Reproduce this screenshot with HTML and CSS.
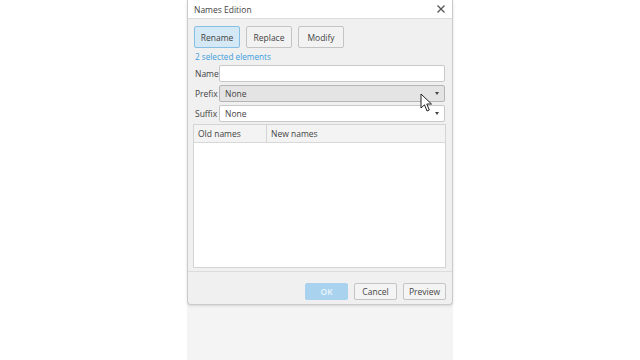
FILE: index.html
```html
<!DOCTYPE html>
<html lang="en">
<head>
    <meta charset="UTF-8">
    <meta name="viewport" content="width=device-width, initial-scale=1.0">
    <title>Names Edition</title>
    <link rel="stylesheet" href="styles.css">
</head>
<body>
    <div class="stage">
        <div class="dialog">
            <div class="title-bar">
                <span class="title">Names Edition</span>
                <svg class="close" width="8" height="8" viewBox="0 0 8 8">
                    <path d="M0.5 0.5 L7.5 7.5 M7.5 0.5 L0.5 7.5" stroke="#555" stroke-width="1.3"/>
                </svg>
            </div>
            <div class="content">
                <div class="modes">
                    <button class="mode active">Rename</button>
                    <button class="mode">Replace</button>
                    <button class="mode">Modify</button>
                </div>
                <p class="selection">2 selected elements</p>
                <div class="field">
                    <label class="label">Name</label>
                    <div class="input"></div>
                </div>
                <div class="field">
                    <label class="label">Prefix</label>
                    <div class="input select hover">None<span class="arrow"></span></div>
                </div>
                <div class="field">
                    <label class="label">Suffix</label>
                    <div class="input select">None<span class="arrow"></span></div>
                </div>
                <div class="table">
                    <div class="table-head">
                        <div class="col old">Old names</div>
                        <div class="col">New names</div>
                    </div>
                </div>
            </div>
            <div class="footer">
                <button class="action primary">OK</button>
                <button class="action">Cancel</button>
                <button class="action">Preview</button>
            </div>
        </div>
        <svg class="cursor" width="13" height="20" viewBox="0 0 13 20">
            <path d="M1 1 L1 15 L4.5 11.8 L7 18 L9.3 17 L6.8 11 L11.5 11 Z" fill="#fff" stroke="#222" stroke-width="1" stroke-linejoin="round"/>
        </svg>
    </div>
</body>
</html>
```

FILE: styles.css
```css
body {
    margin: 0;
    background: #ffffff;
    font-family: "Open Sans", "Noto Sans", sans-serif;
    font-size: 8px;
    color: #333;
}
.stage {
    position: relative;
    width: 266px;
    height: 360px;
    margin: 0 auto;
    background: #f4f4f4;
}
.dialog {
    background: #f0f0f0;
    border: 1px solid #c9c9c9;
    border-top: none;
    border-radius: 0 0 4px 4px;
    box-shadow: 0 1px 3px rgba(0, 0, 0, 0.12);
}
.title-bar {
    height: 18px;
    display: flex;
    align-items: center;
    justify-content: space-between;
    padding: 0 6px 0 6px;
    background: #fff;
    border-bottom: 1px solid #dcdcdc;
}
.title {
    font-size: 8.5px;
    color: #444;
}
.close {
    margin-right: 1px;
}
.content {
    padding: 7px 6px 0 5px;
}
.modes {
    display: flex;
    gap: 6px;
    padding-left: 1px;
}
.mode {
    width: 46px;
    height: 22px;
    padding: 0;
    font-family: inherit;
    font-size: 8.5px;
    color: #444;
    background: #f2f2f2;
    border: 1px solid #c4c4c4;
    border-radius: 2px;
}
.mode.active {
    background: #d4e8f6;
    border-color: #86bfe4;
}
.selection {
    margin: 3px 0 2px 2px;
    height: 12px;
    line-height: 12px;
    font-size: 8.2px;
    color: #3d9ddc;
}
.field {
    display: flex;
    align-items: center;
    height: 17px;
    margin-bottom: 3px;
}
.label {
    width: 24px;
    padding-left: 2px;
    color: #444;
    font-size: 8.5px;
}
.input {
    flex: 1;
    height: 15px;
    margin-right: 1px;
    background: #fff;
    border: 1px solid #c8c8c8;
    border-radius: 2px;
}
.select {
    position: relative;
    display: flex;
    align-items: center;
    padding-left: 5px;
    font-size: 8.5px;
    color: #444;
}
.select.hover {
    background: #e4e4e4;
    border-color: #b5b5b5;
}
.arrow {
    position: absolute;
    right: 5px;
    top: 6px;
    border-left: 2.5px solid transparent;
    border-right: 2.5px solid transparent;
    border-top: 3px solid #444;
}
.table {
    height: 142px;
    margin-top: -1px;
    background: #fff;
    border: 1px solid #d4d4d4;
}
.table-head {
    display: flex;
    height: 17px;
    background: #f3f3f3;
    border-bottom: 1px solid #d8d8d8;
}
.col {
    display: flex;
    align-items: center;
    padding-left: 4px;
    font-size: 8.5px;
    color: #444;
}
.old {
    width: 68px;
    border-right: 1px solid #d4d4d4;
}
.footer {
    display: flex;
    justify-content: flex-end;
    gap: 6px;
    margin-top: 3px;
    padding: 11px 6px 4px 6px;
    border-top: 1px solid #dcdcdc;
}
.action {
    width: 43px;
    height: 17px;
    padding: 0;
    font-family: inherit;
    font-size: 8.5px;
    color: #444;
    background: #f4f4f4;
    border: 1px solid #c4c4c4;
    border-radius: 2px;
}
.action.primary {
    color: #eaf5fc;
    font-weight: 600;
    background: #a8d2ee;
    border-color: #a8d2ee;
}
.cursor {
    position: absolute;
    left: 233px;
    top: 93px;
}
```
